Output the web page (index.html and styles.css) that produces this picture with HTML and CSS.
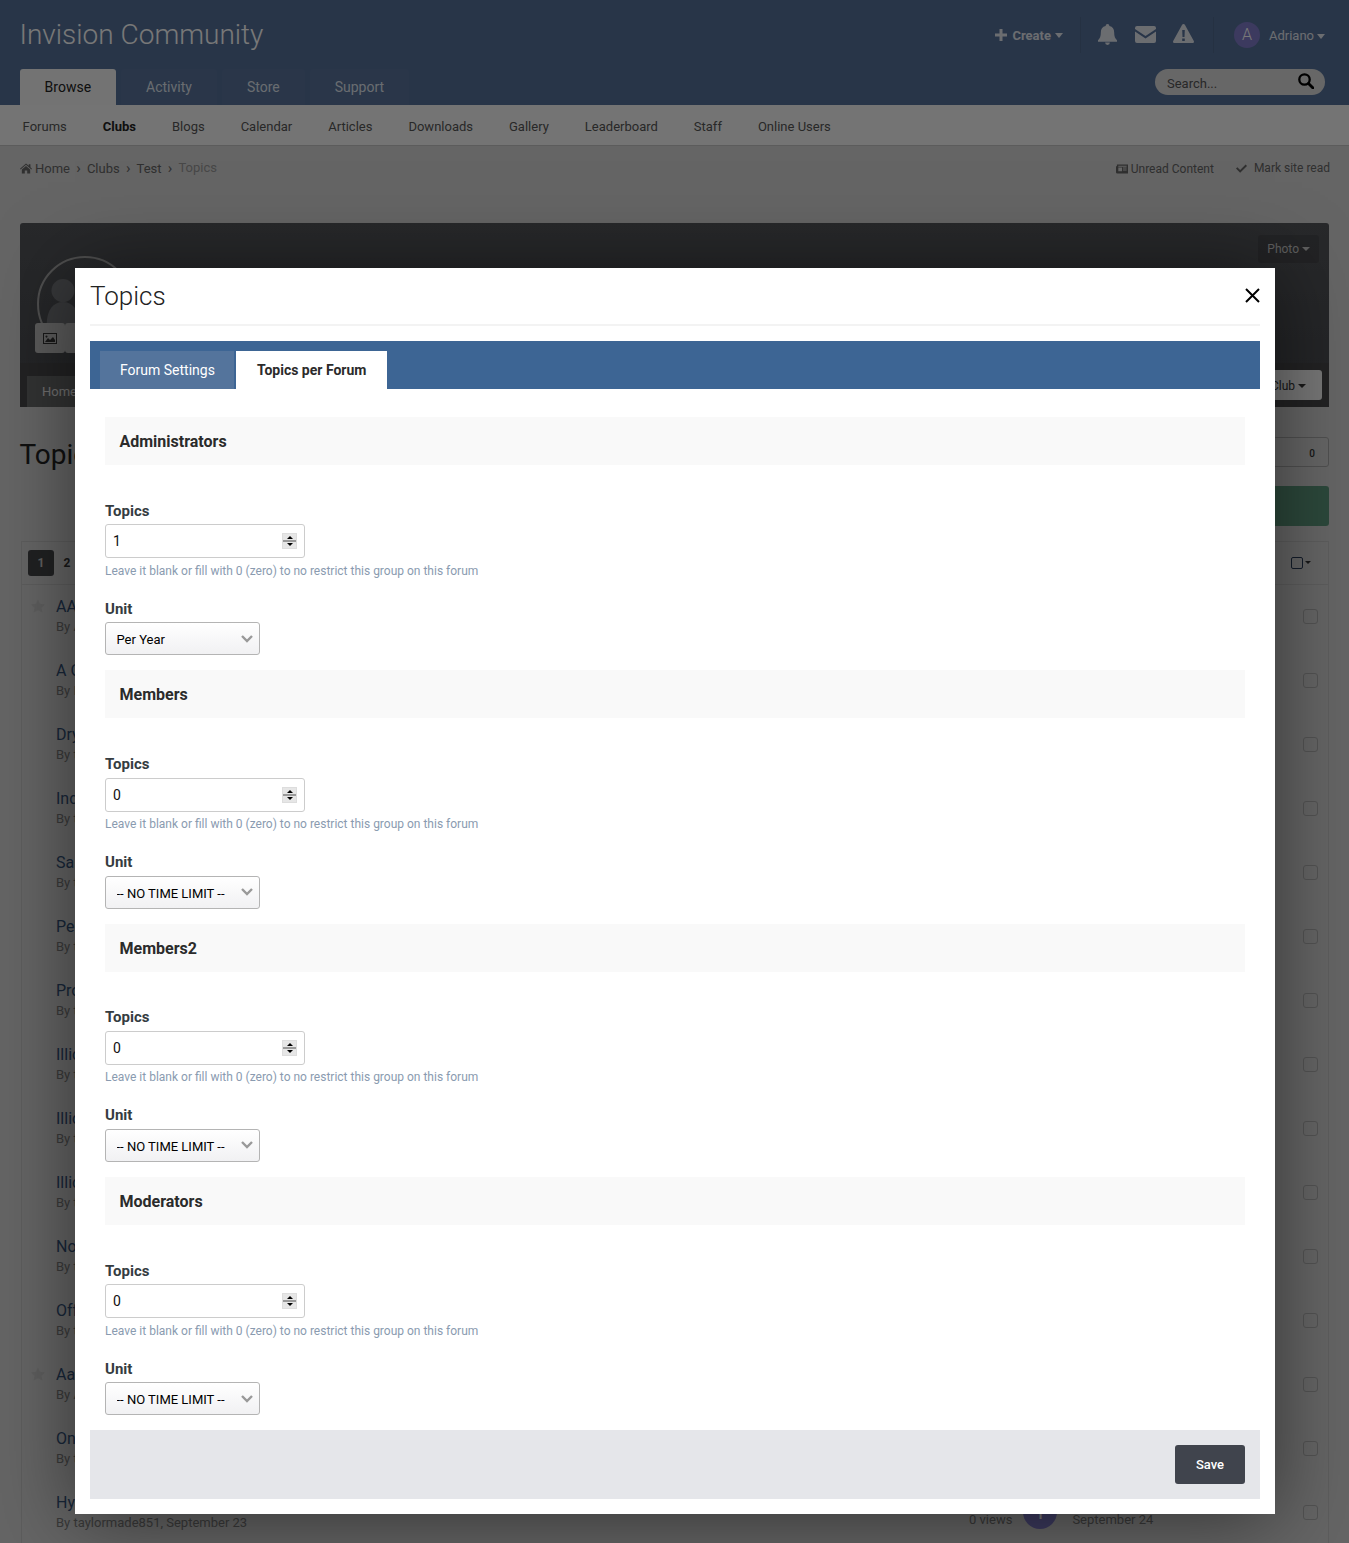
FILE: index.html
```html
<!DOCTYPE html>
<html>
<head>
    <title>Topics</title>
    <link rel="stylesheet" href="styles.css">
</head>
<body>
    <!-- Page behind the dialog -->
    <header class="site-header">
        <div class="header-top">
            <a class="logo">Invision Community</a>
            <div class="user-bar">
                <a class="create-link"><svg class="icon-plus" viewBox="0 0 12 12"><path d="M4.500 0h3v4.500H12v3H7.500V12h-3V7.500H0v-3h4.500z"/></svg>Create<span class="caret"></span></a>
                <span class="bar-sep first"></span>
                <svg class="bar-icon bell" viewBox="0 0 20 22"><path d="M10 0a2 2 0 0 1 2 2c3.500.7 5 3.300 5 6.500 0 4.500 1 6.500 3 8.500v1.500H0V17c2-2 3-4 3-8.500C3 5.300 4.500 2.700 8 2a2 2 0 0 1 2-2zM7.500 19.500h5a2.500 2.500 0 0 1-5 0z"/></svg>
                <svg class="bar-icon envelope" viewBox="0 0 21 17"><path d="M2 0h17a2 2 0 0 1 2 2v1l-10.500 7L0 3V2a2 2 0 0 1 2-2zM0 5.500l10.500 7 10.500-7V15a2 2 0 0 1-2 2H2a2 2 0 0 1-2-2z"/></svg>
                <svg class="bar-icon warning" viewBox="0 0 21 19"><path fill-rule="evenodd" d="M10.500 0c.7 0 1.200.4 1.500 1l8.800 16c.5 1-.2 2-1.300 2H1.500C.4 19-.3 18 .2 17L9 1c.3-.6.8-1 1.500-1zM9.200 6l.3 7h2l.3-7zM9.200 14.500v2.600h2.600v-2.600z"/></svg>
                <span class="bar-sep"></span>
                <span class="user-avatar">A</span>
                <a class="user-link">Adriano<span class="caret"></span></a>
            </div>
        </div>
        <div class="header-bottom">
            <ul class="main-tabs">
                <li class="main-tab active">Browse</li>
                <li class="main-tab">Activity</li>
                <li class="main-tab">Store</li>
                <li class="main-tab">Support</li>
            </ul>
            <div class="search-box">
                <span>Search...</span>
                <svg viewBox="0 0 16 16"><circle cx="6.500" cy="6.500" r="5.200" fill="none" stroke="#000" stroke-width="2.300"/><path d="M10.500 10.500L15 15" stroke="#000" stroke-width="2.800" stroke-linecap="round"/></svg>
            </div>
        </div>
    </header>

    <nav class="sub-nav">
        <a>Forums</a>
        <a class="current">Clubs</a>
        <a>Blogs</a>
        <a>Calendar</a>
        <a>Articles</a>
        <a>Downloads</a>
        <a>Gallery</a>
        <a>Leaderboard</a>
        <a>Staff</a>
        <a>Online Users</a>
    </nav>

    <div class="crumbs">
        <svg class="crumb-home" viewBox="0 0 13 11"><path d="M6.500 0L9.500 2.600V1h1.800v3.200L13 5.700l-.7.800-5.800-5-5.800 5-.7-.8zM2 6.700l4.500-3.900L11 6.700V11H7.800V7.800H5.200V11H2z"/></svg>
        <a>Home</a><span class="crumb-sep">›</span>
        <a>Clubs</a><span class="crumb-sep">›</span>
        <a>Test</a><span class="crumb-sep">›</span>
        <span class="crumb-current">Topics</span>
        <div class="crumb-links">
            <a class="unread-link"><svg class="crumb-news" viewBox="0 0 13 10"><path fill-rule="evenodd" d="M1 0h12v10H1.500A1.500 1.500 0 0 1 0 8.500V2h1zM2.500 1.500v1h9v-1zM2.500 3.500v4h4v-4zM7.500 3.500v1h4v-1zM7.500 5.500v1h4v-1z"/></svg>Unread Content</a>
            <a><svg class="crumb-check" viewBox="0 0 12 9"><path d="M1.500 3L4.500 6l6-6L12 1.700 4.500 9 0 4.500z"/></svg>Mark site read</a>
        </div>
    </div>

    <section class="club-hero">
        <div class="hero-photo">
            <div class="club-avatar">
                <svg viewBox="0 0 96 96"><circle cx="25" cy="34" r="12"/><path d="M8 70c0-16 7-24 17-24s17 8 17 24z"/><circle cx="52" cy="46" r="14"/></svg>
            </div>
            <span class="thumb-btn first"><svg viewBox="0 0 14 11"><path fill-rule="evenodd" d="M0 0h14v11H0zM1 1v9h12V1zM2 9l3-4 2 2 3-3 2 3v2zM3.500 2.500a1 1 0 1 0 .01 0z"/></svg></span>
            <span class="thumb-btn second"></span>
            <a class="photo-btn">Photo<span class="caret"></span></a>
        </div>
        <div class="hero-tabs">
            <a class="hero-tab">Home</a>
            <a class="club-btn">Club<span class="caret"></span></a>
        </div>
    </section>

    <div class="title-row">
        <h1>Topics</h1>
        <div class="follow-box">0</div>
    </div>
    <div class="action-row"><a class="start-btn"></a></div>

    <div class="topic-list">
        <div class="list-head">
            <span class="page-num current">1</span>
            <span class="page-num">2</span>
            <span class="list-check"><span class="caret"></span></span>
        </div>
        <div class="topic-row"><svg class="star" viewBox="0 0 16 15"><path d="M8 0l2.400 5 5.600.7-4.100 3.800 1.100 5.500L8 12.300 3 15l1.100-5.500L0 5.700 5.600 5z"/></svg><div class="topic-main"><a>AA</a><p>By A</p></div><span class="row-check"></span></div>
        <div class="topic-row"><div class="topic-main"><a>A G</a><p>By I</p></div><span class="row-check"></span></div>
        <div class="topic-row"><div class="topic-main"><a>Dry</a><p>By t</p></div><span class="row-check"></span></div>
        <div class="topic-row"><div class="topic-main"><a>Inc</a><p>By t</p></div><span class="row-check"></span></div>
        <div class="topic-row"><div class="topic-main"><a>Sa</a><p>By t</p></div><span class="row-check"></span></div>
        <div class="topic-row"><div class="topic-main"><a>Pe</a><p>By t</p></div><span class="row-check"></span></div>
        <div class="topic-row"><div class="topic-main"><a>Pro</a><p>By t</p></div><span class="row-check"></span></div>
        <div class="topic-row"><div class="topic-main"><a>Illic</a><p>By t</p></div><span class="row-check"></span></div>
        <div class="topic-row"><div class="topic-main"><a>Illic</a><p>By t</p></div><span class="row-check"></span></div>
        <div class="topic-row"><div class="topic-main"><a>Illic</a><p>By t</p></div><span class="row-check"></span></div>
        <div class="topic-row"><div class="topic-main"><a>No</a><p>By t</p></div><span class="row-check"></span></div>
        <div class="topic-row"><div class="topic-main"><a>Off</a><p>By t</p></div><span class="row-check"></span></div>
        <div class="topic-row"><svg class="star" viewBox="0 0 16 15"><path d="M8 0l2.400 5 5.600.7-4.100 3.800 1.100 5.500L8 12.300 3 15l1.100-5.500L0 5.700 5.600 5z"/></svg><div class="topic-main"><a>Aa</a><p>By A</p></div><span class="row-check"></span></div>
        <div class="topic-row"><div class="topic-main"><a>On</a><p>By t</p></div><span class="row-check"></span></div>
        <div class="topic-row"><div class="topic-main"><a>Hy</a><p>By taylormade851, September 23</p></div>
            <div class="topic-stats"><span class="stat-text">0 views</span><span class="stat-avatar">I</span><span class="stat-text">September 24</span></div>
            <span class="row-check"></span></div>
    </div>

    <div class="backdrop"></div>

    <!-- Dialog -->
    <div class="modal">
        <div class="modal-head">
            <h2>Topics</h2>
            <svg class="modal-close" viewBox="0 0 15 15"><path d="M1 1l13 13M14 1L1 14" stroke="#000" stroke-width="2"/></svg>
        </div>
        <div class="form-tabs">
            <a class="form-tab">Forum Settings</a>
            <a class="form-tab active">Topics per Forum</a>
        </div>
        <form class="limit-form">
            <div class="group">
                <h3>Administrators</h3>
                <label>Topics</label>
                <div class="number-field"><input type="number" value="1"><span class="spinner"><i class="up"></i><i class="down"></i></span></div>
                <p class="hint">Leave it blank or fill with 0 (zero) to no restrict this group on this forum</p>
                <label class="unit-label">Unit</label>
                <select><option>Per Year</option></select>
            </div>
            <div class="group">
                <h3>Members</h3>
                <label>Topics</label>
                <div class="number-field"><input type="number" value="0"><span class="spinner"><i class="up"></i><i class="down"></i></span></div>
                <p class="hint">Leave it blank or fill with 0 (zero) to no restrict this group on this forum</p>
                <label class="unit-label">Unit</label>
                <select><option>-- NO TIME LIMIT --</option></select>
            </div>
            <div class="group">
                <h3>Members2</h3>
                <label>Topics</label>
                <div class="number-field"><input type="number" value="0"><span class="spinner"><i class="up"></i><i class="down"></i></span></div>
                <p class="hint">Leave it blank or fill with 0 (zero) to no restrict this group on this forum</p>
                <label class="unit-label">Unit</label>
                <select><option>-- NO TIME LIMIT --</option></select>
            </div>
            <div class="group">
                <h3>Moderators</h3>
                <label>Topics</label>
                <div class="number-field"><input type="number" value="0"><span class="spinner"><i class="up"></i><i class="down"></i></span></div>
                <p class="hint">Leave it blank or fill with 0 (zero) to no restrict this group on this forum</p>
                <label class="unit-label">Unit</label>
                <select><option>-- NO TIME LIMIT --</option></select>
            </div>
        </form>
        <div class="modal-foot">
            <button class="save-btn">Save</button>
        </div>
    </div>
</body>
</html>
```

FILE: styles.css
```css
html, body {
    height: 1543px;
    overflow: hidden;
}

body {
    margin: 0;
    background: #d6d6d6;
    font-family: Roboto, "Liberation Sans", sans-serif;
    font-size: 13px;
    color: #333;
    position: relative;
}

ul, h1, h2, h3, p {
    margin: 0;
    padding: 0;
}

.caret {
    display: inline-block;
    margin-left: 3px;
    vertical-align: 2px;
    border-top: 4px solid currentColor;
    border-left: 4px solid transparent;
    border-right: 4px solid transparent;
}

/* Header */
.site-header {
    height: 105px;
    background: #56719a;
    padding: 0 24px 0 20px;
    box-sizing: border-box;
}

.header-top {
    height: 69px;
    display: flex;
    justify-content: space-between;
    align-items: center;
}

.logo {
    font-size: 28px;
    font-weight: 300;
    color: #fff;
    margin-left: -0.500px;
}

.user-bar {
    display: flex;
    align-items: center;
    color: #e4e8ef;
}

.create-link {
    font-weight: 700;
    display: flex;
    align-items: center;
    padding-top: 2px;
}

.user-link {
    padding-top: 2px;
}

.create-link .caret, .user-link .caret {
    margin-left: 3px;
    vertical-align: 1px;
    border-top-width: 5px;
    border-left-width: 4.500px;
    border-right-width: 4.500px;
}

.create-link .caret {
    margin-left: 4px;
}

.icon-plus {
    width: 12px;
    height: 12px;
    margin: -2px 5px 0 0;
    fill: currentColor;
}

.bar-sep {
    width: 1px;
    height: 36px;
    background: rgba(0, 0, 0, 0.08);
    margin: 0 17px 0 18px;
}

.bar-sep.first {
    margin-left: 17px;
}

.bar-icon {
    fill: currentColor;
}

.bell { width: 19px; height: 21px; }
.envelope { width: 21px; height: 17px; margin-left: 18px; }
.warning { width: 21px; height: 19px; margin: -2px 1px 0 17px; }

.user-avatar {
    width: 26px;
    height: 26px;
    border-radius: 50%;
    background: #807bca;
    color: #fff;
    font-size: 16px;
    font-weight: 300;
    display: flex;
    align-items: center;
    justify-content: center;
    margin: 0 9px 0 3px;
}

.header-bottom {
    height: 36px;
    display: flex;
    justify-content: space-between;
}

.main-tabs {
    display: flex;
    list-style: none;
    gap: 5px;
}

.main-tab {
    padding: 0 25px;
    font-size: 14px;
    line-height: 36px;
    color: #dfe5ee;
    background: rgba(255, 255, 255, 0.02);
    border-radius: 3px 3px 0 0;
}

.main-tab.active {
    padding-left: 24.600px;
    background: #f5f5f5;
    color: #222;
}

.search-box {
    width: 170px;
    height: 26px;
    border-radius: 13px;
    background: #dcdcdc;
    padding: 0 11px 0 12px;
    box-sizing: border-box;
    display: flex;
    justify-content: space-between;
    align-items: center;
    color: #555;
    font-size: 13px;
}

.search-box span {
    padding-top: 2px;
}

.search-box svg {
    width: 16px;
    height: 16px;
    margin-top: -3px;
}

/* Sub navigation */
.sub-nav {
    height: 40px;
    background: #f7f7f7;
    border-bottom: 1px solid #c4c4c4;
    display: flex;
    align-items: center;
    padding-left: 4.600px;
    color: #555;
}

.sub-nav a {
    padding: 2px 18px 0;
}

.sub-nav .current {
    font-weight: 700;
    color: #222;
}

/* Breadcrumb */
.crumbs {
    display: flex;
    align-items: center;
    height: 44px;
    padding: 0 19px 0 20px;
    color: #666;
    margin-bottom: 33px;
}

.crumb-home {
    width: 12px;
    height: 11px;
    fill: currentColor;
    margin-right: 3px;
}

.crumb-sep {
    margin: 0 6.200px;
    font-size: 15px;
    line-height: 1;
}

.crumb-current {
    color: #999;
    margin-top: -2px;
}

.crumb-links {
    margin-left: auto;
    display: flex;
    gap: 22px;
    font-size: 12px;
}

.crumb-links a {
    display: flex;
    align-items: center;
}

.crumb-links .unread-link {
    padding-top: 2px;
}

.crumb-news {
    width: 12px;
    height: 10px;
    fill: currentColor;
    margin-right: 3px;
}

.crumb-check {
    width: 11px;
    height: 9px;
    fill: currentColor;
    margin-right: 7px;
}

/* Club hero */
.club-hero {
    margin: 0 20px;
    height: 184px;
    border-radius: 3px 3px 0 0;
    background: linear-gradient(#55575b, #4a4c50);
    display: flex;
    flex-direction: column;
    color: #b0b0b0;
}

.hero-photo {
    height: 140px;
    position: relative;
}

.club-avatar {
    position: absolute;
    left: 17px;
    top: 33px;
    width: 96px;
    height: 96px;
    border: 2px solid #a8a8a8;
    border-radius: 50%;
    box-sizing: border-box;
    overflow: hidden;
}

.club-avatar svg {
    width: 100%;
    height: 100%;
    fill: #75777b;
}

.thumb-btn {
    position: absolute;
    top: 100px;
    width: 30px;
    height: 30px;
    background: #c2c2c2;
    border-radius: 3px;
    display: flex;
    align-items: center;
    justify-content: center;
}

.thumb-btn.first { left: 15px; }
.thumb-btn.second { left: 45px; }

.thumb-btn svg {
    width: 14px;
    height: 11px;
    fill: #333;
}

.photo-btn {
    position: absolute;
    right: 10px;
    top: 12px;
    height: 28px;
    padding: 0 9px;
    line-height: 28px;
    font-size: 12px;
    border-radius: 3px;
    background: rgba(0, 0, 0, 0.12);
    color: #c8c8c8;
}

.hero-tabs {
    height: 44px;
    background: #48494b;
    display: flex;
    justify-content: space-between;
    padding: 0 7px;
    align-items: flex-end;
}

.hero-tab {
    height: 31px;
    line-height: 31px;
    padding: 0 15px;
    background: #6b6c6e;
    color: #ececec;
}

.club-btn {
    height: 30px;
    line-height: 32px;
    padding: 0 16px 0 50px;
    margin-bottom: 7px;
    border-radius: 3px;
    background: #fafafa;
    font-size: 12px;
    color: #333;
}

/* Title row */
.title-row {
    margin: 0 20px;
    height: 79px;
    display: flex;
    justify-content: space-between;
    align-items: center;
    padding-top: 16px;
    box-sizing: border-box;
}

h1 {
    font-size: 28px;
    font-weight: 400;
    color: #222;
    margin-left: -0.500px;
}

.follow-box {
    width: 60px;
    height: 30px;
    border: 1px solid #aaa;
    border-radius: 3px;
    box-sizing: border-box;
    text-align: right;
    padding-right: 13px;
    line-height: 32px;
    font-size: 10px;
    font-weight: 500;
    margin-top: -5px;
}

.action-row {
    margin: 0 20px;
    display: flex;
    justify-content: flex-end;
}

.start-btn {
    width: 200px;
    height: 40px;
    border-radius: 3px;
    background: #5f9a7e;
}

/* Topic list */
.topic-list {
    margin: 15px 20px 0 21px;
    border: 1px solid #c6c6c6;
}

.list-head {
    height: 42px;
    border-bottom: 1px solid #c6c6c6;
    display: flex;
    align-items: center;
    padding: 0 25px 0 6px;
    font-size: 12px;
    font-weight: 700;
}

.page-num {
    width: 26px;
    height: 26px;
    line-height: 26px;
    text-align: center;
}

.page-num.current {
    background: #44464a;
    color: #ccc;
    border-radius: 3px;
}

.list-check {
    margin-left: auto;
    width: 10px;
    height: 10px;
    border: 1.500px solid #2a3c5a;
    border-radius: 2px;
    position: relative;
}

.list-check .caret {
    position: absolute;
    left: 10px;
    top: 3px;
    border-width: 3px 3px 0;
}

.topic-row {
    height: 64px;
    display: flex;
    padding: 12px 10px 0 34px;
    box-sizing: border-box;
    position: relative;
}

.star {
    position: absolute;
    left: 9px;
    top: 14px;
    width: 14px;
    height: 14px;
    fill: #c8c8c8;
}

.topic-main {
    flex: 1;
}

.topic-main a {
    font-size: 16px;
    line-height: 20px;
    display: block;
    color: #33527a;
}

.topic-main p {
    color: #7c7c7c;
    line-height: 19px;
}

.topic-stats {
    display: flex;
    align-items: center;
    color: #777;
    position: absolute;
    left: 947px;
    top: 14px;
}

.stat-text {
    margin-top: 15px;
}

.stat-avatar {
    width: 34px;
    height: 34px;
    border-radius: 50%;
    background: #807bca;
    color: #fff;
    margin: 0 15px 0 11px;
    display: flex;
    align-items: center;
    justify-content: center;
    font-size: 20px;
}

.row-check {
    width: 15px;
    height: 15px;
    border: 1px solid #b0b0b0;
    border-radius: 3px;
    box-sizing: border-box;
    margin-top: 12px;
}

/* Dialog */
.backdrop {
    position: absolute;
    inset: 0;
    background: rgba(0, 0, 0, 0.53);
}

.modal {
    position: absolute;
    left: 75px;
    top: 268px;
    width: 1200px;
    box-sizing: border-box;
    padding: 0 15px 15px;
    background: #fff;
    box-shadow: 0 5px 75px rgba(0, 0, 0, 0.5);
}

.modal-head {
    height: 58px;
    box-sizing: border-box;
    border-bottom: 2px solid #f3f3f3;
    display: flex;
    justify-content: space-between;
    align-items: center;
}

.modal-head h2 {
    font-size: 26px;
    font-weight: 300;
    color: #222;
}

.modal-close {
    width: 15px;
    height: 15px;
    margin-top: -2px;
}

.form-tabs {
    margin-top: 15px;
    height: 48px;
    box-sizing: border-box;
    background: #3d6594;
    padding: 10px 0 0 10px;
    display: flex;
    gap: 2px;
}

.form-tab {
    font-size: 14px;
    line-height: 38px;
    padding: 0 19.500px 0 20px;
    background: #54749c;
    color: #fff;
}

.form-tab.active {
    padding: 0 20.500px;
    background: #fff;
    color: #2b2b2b;
    font-weight: 700;
}

.limit-form {
    padding: 13px 15px 0;
}

.group {
    padding-top: 15px;
}

.group h3 {
    height: 48px;
    line-height: 50px;
    padding-left: 14.500px;
    margin-bottom: 35.800px;
    background: #f9f9f9;
    font-size: 16px;
    font-weight: 700;
    color: #2b2b2b;
}

.group label {
    display: block;
    font-size: 15px;
    font-weight: 700;
    line-height: 20px;
    margin-bottom: 3.500px;
    color: #353c41;
}

.number-field {
    width: 200px;
    height: 34px;
    box-sizing: border-box;
    border: 1px solid #ccc;
    border-radius: 3px;
    display: flex;
    align-items: center;
    padding: 0 7px;
}

.number-field input {
    flex: 1;
    min-width: 0;
    border: 0;
    outline: 0;
    padding: 0;
    font: 14px Roboto, sans-serif;
    color: #111;
    appearance: textfield;
}

.spinner {
    width: 15px;
    height: 16px;
    background: #e6e6e6;
    border: 1px solid #ddd;
    box-sizing: border-box;
    display: flex;
    flex-direction: column;
    align-items: center;
    justify-content: space-around;
    background-image: linear-gradient(transparent 6px, #999 6px, #999 8px, transparent 8px);
}

.spinner i {
    width: 0;
    height: 0;
    border-left: 3px solid transparent;
    border-right: 3px solid transparent;
}

.spinner .up { border-bottom: 3px solid #000; }
.spinner .down { border-top: 3px solid #000; }

.hint {
    font-size: 12px;
    line-height: 18px;
    margin-top: 3.400px;
    color: #8a9bb0;
}

.group .unit-label {
    margin-top: 19px;
    margin-bottom: 3.600px;
}

select {
    display: block;
    width: 155px;
    height: 33.030px;
    box-sizing: border-box;
    padding: 2.400px 10px 0 10.500px;
    border: 1px solid #b4b4b4;
    border-radius: 3px;
    appearance: none;
    outline: 0;
    font: 13px Roboto, sans-serif;
    color: #000;
    background: url("data:image/svg+xml,%3Csvg xmlns='http://www.w3.org/2000/svg' width='12' height='8'%3E%3Cpath d='M1 1l5 5 5-5' fill='none' stroke='%23999' stroke-width='2.400'/%3E%3C/svg%3E") no-repeat right 6px center, linear-gradient(#fff, #f1f1f3);
}

.modal-foot {
    margin-top: 15px;
    height: 69px;
    box-sizing: border-box;
    background: #e5e6ea;
    padding: 15px;
    display: flex;
    justify-content: flex-end;
    align-items: flex-start;
}

.save-btn {
    width: 70px;
    height: 39px;
    border: 0;
    border-radius: 3px;
    background: #40444d;
    color: #fff;
    font: 500 13px Roboto, sans-serif;
}
```
